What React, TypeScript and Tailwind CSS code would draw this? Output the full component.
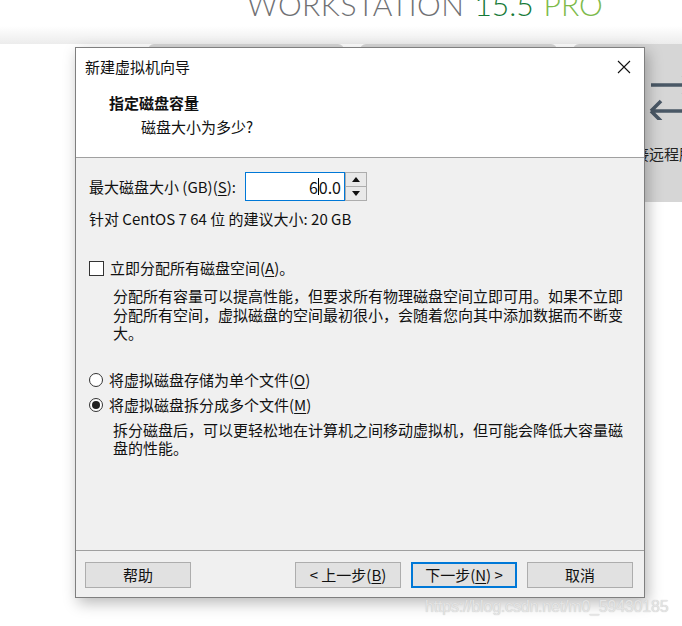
import React from 'react'

const cjk = "font-['Noto_Sans_CJK_SC','Microsoft_YaHei',sans-serif]"

function Key({ k }: { k: string }) {
  return (
    <>
      (<span className="underline underline-offset-2">{k}</span>)
    </>
  )
}

function Button({ children, primary }: { children: React.ReactNode; primary?: boolean }) {
  return (
    <div
      className={`w-[106px] h-[26px] flex items-center justify-center bg-[#e1e1e1] text-[15px] text-[#111] ${
        primary ? 'border-2 border-[#0078d7]' : 'border border-[#adadad]'
      }`}
    >
      {children}
    </div>
  )
}

function Background() {
  return (
    <div className="w-full h-full bg-white">
      <div className="flex pl-[247px] -mt-[11px] h-[37px] font-['Lato',sans-serif] font-light text-[30px] leading-none">
        <span className="text-[#707174] tracking-[0.5px]">WORKSTATION</span>
        <span className="ml-[10px] text-[#157a37]">15.5</span>
        <span className="ml-[10px] text-[#7dba4a]">PRO</span>
      </div>
      <div className="h-[18px] bg-gradient-to-b from-white to-[#ececec]" />
      <div className="flex gap-[16px] pl-[148px]">
        <div className="w-[196px] h-[158px] shrink-0 rounded-md bg-[#d6d6d6]" />
        <div className="w-[197px] h-[158px] shrink-0 rounded-md bg-[#d6d6d6]" />
        <div className="w-[197px] h-[158px] shrink-0 rounded-md bg-[#d6d6d6] flex flex-col items-center pt-[30px]">
          <svg width="50" height="46" viewBox="0 0 50 46">
            <path d="M4 11 H46 M46 11 L36 1 M46 11 L36 21" stroke="#4a5866" strokeWidth="3.6" fill="none" />
            <path d="M4 37 H46 M4 37 L14 27 M4 37 L14 47" stroke="#4a5866" strokeWidth="3.6" fill="none" />
          </svg>
          <div className={`${cjk} mt-[24px] text-[15px] leading-[20px] text-[#222]`}>连接远程服务器</div>
        </div>
      </div>
    </div>
  )
}

function Dialog() {
  return (
    <div
      className={`${cjk} absolute left-[75px] top-[47px] w-[570px] h-[551px] border border-[#7f7f7f] bg-[#f0f0f0] flex flex-col shadow-[3px_5px_14px_rgba(0,0,0,0.28)] text-[#111]`}
    >
      <div className="bg-white h-[109px] border-b border-[#a0a0a0] box-content">
        <div className="h-[38px] flex items-center justify-between pl-[9px] pr-[13px]">
          <span className="text-[15px] leading-[20px]">新建虚拟机向导</span>
          <svg width="14" height="14" viewBox="0 0 14 14">
            <path d="M1 1 L13 13 M13 1 L1 13" stroke="#111" strokeWidth="1.1" />
          </svg>
        </div>
        <div className="pl-[33px] pt-[7px] text-[15px] leading-[20px] font-bold">指定磁盘容量</div>
        <div className="pl-[65px] pt-[4px] text-[15px] leading-[20px]">磁盘大小为多少?</div>
      </div>

      <div className="pl-[13px] text-[15px]">
        <div className="mt-[14px] h-[29px] flex items-center">
          <span className="w-[156px] leading-[20px]">
            最大磁盘大小 (GB)<Key k="S" />:
          </span>
          <div className="w-[100px] h-[29px] border border-[#0078d7] bg-white flex items-center justify-end pr-[3px] leading-[20px] text-[16px]">
            6<span className="inline-block w-0 h-[17px] border-l border-black" />0.0
          </div>
          <div className="w-[22px] h-[29px] border border-[#adadad] bg-[#e9e9e9] flex flex-col">
            <div className="flex-1 flex items-center justify-center border-b border-[#adadad]">
              <svg width="8" height="5" viewBox="0 0 8 5">
                <path d="M0 5 L4 0 L8 5 Z" fill="#111" />
              </svg>
            </div>
            <div className="flex-1 flex items-center justify-center">
              <svg width="8" height="5" viewBox="0 0 8 5">
                <path d="M0 0 L4 5 L8 0 Z" fill="#111" />
              </svg>
            </div>
          </div>
        </div>

        <div className="mt-[8px] leading-[20px]">针对 CentOS 7 64 位 的建议大小: 20 GB</div>

        <div className="mt-[29px] h-[20px] flex items-center">
          <div className="w-[15px] h-[15px] border border-[#333] bg-white" />
          <span className="ml-[6px] leading-[20px]">
            立即分配所有磁盘空间<Key k="A" />。
          </span>
        </div>
        <div className="mt-[9px] pl-[24px] leading-[18.5px]">
          <div>分配所有容量可以提高性能，但要求所有物理磁盘空间立即可用。如果不立即</div>
          <div>分配所有空间，虚拟磁盘的空间最初很小，会随着您向其中添加数据而不断变</div>
          <div>大。</div>
        </div>

        <div className="mt-[27px] h-[20px] flex items-center">
          <div className="w-[14px] h-[14px] rounded-full border border-[#333] bg-white" />
          <span className="ml-[6px] leading-[20px]">
            将虚拟磁盘存储为单个文件<Key k="O" />
          </span>
        </div>
        <div className="mt-[5px] h-[20px] flex items-center">
          <div className="w-[14px] h-[14px] rounded-full border border-[#333] bg-white flex items-center justify-center">
            <div className="w-[8px] h-[8px] rounded-full bg-[#222]" />
          </div>
          <span className="ml-[6px] leading-[20px]">
            将虚拟磁盘拆分成多个文件<Key k="M" />
          </span>
        </div>
        <div className="mt-[6px] pl-[24px] leading-[18.5px]">
          <div>拆分磁盘后，可以更轻松地在计算机之间移动虚拟机，但可能会降低大容量磁</div>
          <div>盘的性能。</div>
        </div>
      </div>

      <div className="mt-auto border-t border-[#a0a0a0] pt-[11px] pb-[9px] pl-[9px] pr-[11px] flex justify-between">
        <Button>帮助</Button>
        <div className="flex gap-[10px]">
          <Button>
            &lt; 上一步<Key k="B" />
          </Button>
          <Button primary>
            下一步<Key k="N" /> &gt;
          </Button>
          <Button>取消</Button>
        </div>
      </div>
    </div>
  )
}

export default function App() {
  return (
    <div className="relative w-[682px] h-[626px] overflow-hidden bg-white">
      <Background />
      <Dialog />
      <div className="absolute left-[425px] top-[597px] font-['Liberation_Sans',Arial,sans-serif] text-[16px] tracking-[-0.2px] leading-[20px] text-[#e4e4e4] [text-shadow:0_0_1px_#bdbdbd]">
        https://blog.csdn.net/m0_59430185
      </div>
    </div>
  )
}
